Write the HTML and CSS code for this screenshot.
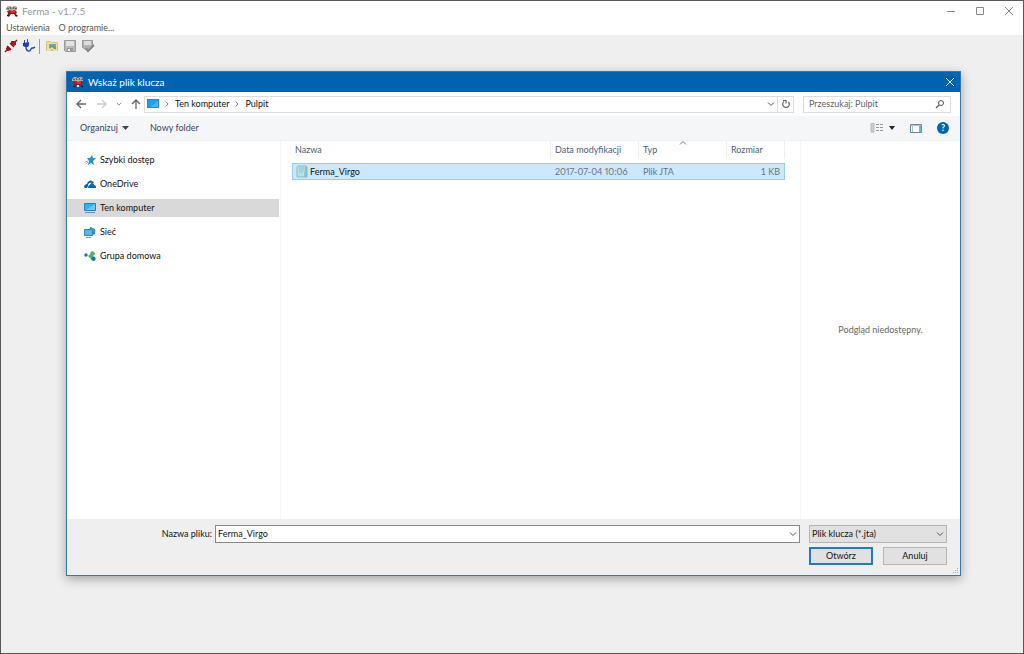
FILE: index.html
```html
<!DOCTYPE html>
<html lang="pl">
<head>
<meta charset="utf-8">
<title>Ferma - v1.7.5</title>
<link rel="stylesheet" href="styles.css">
</head>
<body>
<svg class="defs" width="0" height="0" aria-hidden="true">
  <symbol id="crab" viewBox="0 0 12 12">
    <path d="M0 3l2-2h2l2 1 2-1h2l1 2v2H9L6 6 3 5H0z" fill="#b9aaa2"/>
    <path d="M1 3l2 1M4 2l1 2M8 2L7 4M11 3L9 4" stroke="#5a4340" fill="none"/>
    <path d="M1 6l3-1 2 1 3-1 2 2-1 2 2 2-2 1-2-3H5l-2 3-2-1 1-3z" fill="#8a2022"/>
    <path d="M3 5l2 1-1 2zM7 5h2v3H7zM5 6h2v2H5z" fill="#e02830"/>
    <path d="M1 10h2v1H1zM9 10h2v1H9z" fill="#2c1b1b"/>
    <path d="M5 9h2v2H5z" fill="#f5e9e6"/>
  </symbol>
  <symbol id="cross" viewBox="0 0 10 10"><path d="M1 1l8 8M9 1L1 9" fill="none" stroke="currentColor"/></symbol>
  <symbol id="chevron" viewBox="0 0 8 8"><path d="M1 2.500l3 3 3-3" fill="none" stroke="currentColor"/></symbol>
  <symbol id="arrow" viewBox="0 0 10 10"><path d="M1 5h9M5 1L1 5l4 4" fill="none" stroke="currentColor" stroke-width="1.300"/></symbol>
</svg>
<div class="app">
  <header class="titlebar">
    <svg class="crab"><use href="#crab"/></svg>
    <h1 class="title">Ferma - v1.7.5</h1>
    <div class="window-buttons">
      <button class="plain" aria-label="Minimalizuj"><svg width="10" height="10"><path d="M1 5.500h8" stroke="currentColor"/></svg></button>
      <button class="plain" aria-label="Maksymalizuj"><svg width="10" height="10"><path d="M1.500 1.500h7v7h-7z" fill="none" stroke="currentColor"/></svg></button>
      <button class="plain" aria-label="Zamknij"><svg width="10" height="10"><use href="#cross"/></svg></button>
    </div>
  </header>
  <nav class="menu">
    <button class="plain">Ustawienia</button>
    <button class="plain">O programie...</button>
  </nav>
  <div class="tools">
    <button class="plain" aria-label="Rozłącz"><svg width="14" height="14" viewBox="0 0 14 14"><path d="M1 13l2-2M11 3l2-2" stroke="#8d1a1a" stroke-width="1.500"/><path d="M2 9l2-2 3 3-2 2H2zM7 5V2h4l1 1v3l-2 1z" fill="#a51a1d"/><path d="M3 7l4 4M6 4l4 4" stroke="#7c1015" stroke-width="1.300"/></svg></button>
    <button class="plain" aria-label="Połącz"><svg width="14" height="14" viewBox="0 0 14 14"><path d="M2.500 1v3M5.500 0v3" stroke="#334a91"/><path d="M1 4l6-1v3L6 8H3L1 7z" fill="#1c3fc0"/><path d="M4 8c0 5 4 5 5 2 1-2 2 0 4-2" fill="none" stroke="#24459f" stroke-width="1.300"/></svg></button>
    <span class="divider"></span>
    <button class="plain" aria-label="Otwórz"><svg width="14" height="14" viewBox="0 0 14 14"><path d="M1.500 3.500v-1h4l1 1h6v8h-11z" fill="#f4df91" stroke="#d6c27d"/><path d="M4 5h7v4H4z" fill="#5aaed2"/><path d="M5 8l3-2 3 3v2H5z" fill="#6b9b79"/><path d="M2 11h3l2-2 2 2h3" fill="none" stroke="#f4e6aa" stroke-width="1.500"/></svg></button>
    <button class="plain" aria-label="Zapisz" disabled><svg width="14" height="14" viewBox="0 0 14 14"><path d="M1.500 1.500h11v11h-10l-1-1z" fill="#b9b9b9" stroke="#999"/><path d="M3 2h8v5H3z" fill="#e1e1e1"/><path d="M4 9h6v3H4z" fill="#999"/><path d="M5 10h2v2H5z" fill="#eee"/></svg></button>
    <button class="plain" aria-label="Zapisz jako" disabled><svg width="14" height="14" viewBox="0 0 14 14"><path d="M1.500 1.500h10v7l-4 4-6-4z" fill="#b2b2b2" stroke="#999"/><path d="M3 2h7v4H3z" fill="#ddd"/><path d="M5 9l2 3 6-6" fill="none" stroke="#888" stroke-width="2"/></svg></button>
  </div>
  <main class="workspace">
    <section class="dialog" role="dialog" aria-labelledby="dialog-title">
      <header class="dialog-title">
        <svg class="crab"><use href="#crab"/></svg>
        <h2 class="title" id="dialog-title">Wskaż plik klucza</h2>
        <button class="plain" aria-label="Zamknij okno"><svg width="10" height="10"><use href="#cross"/></svg></button>
      </header>
      <div class="navigation">
        <div class="history">
          <button class="plain" aria-label="Wstecz"><svg width="10" height="10"><use href="#arrow"/></svg></button>
          <button class="plain faint" aria-label="Dalej"><svg class="flip" width="10" height="10"><use href="#arrow"/></svg></button>
          <button class="plain recent" aria-label="Ostatnie"><svg width="6" height="6"><use href="#chevron"/></svg></button>
          <button class="plain" aria-label="W górę"><svg class="up" width="10" height="10"><use href="#arrow"/></svg></button>
        </div>
        <div class="address">
          <svg width="12" height="10"><path d="M0 0h12v9H0z" fill="#168ce0"/><path d="M1 1h10v7H1z" fill="#16a3f5"/><path d="M3 8l8-6v6z" fill="#42b9ff"/></svg>
          <svg class="right" width="6" height="6"><use href="#chevron"/></svg>
          <button class="plain">Ten komputer</button>
          <svg class="right" width="6" height="6"><use href="#chevron"/></svg>
          <button class="plain">Pulpit</button>
          <button class="plain push" aria-label="Poprzednie lokalizacje"><svg width="8" height="8"><use href="#chevron"/></svg></button>
          <button class="plain refresh" aria-label="Odśwież"><svg width="10" height="10" viewBox="0 0 10 10"><path d="M3 2.500A3.300 3.300 0 1 0 7.500 3M2 1.500h3v3" fill="none" stroke="currentColor" stroke-width="1.200"/></svg></button>
        </div>
        <div class="search">
          <input type="text" placeholder="Przeszukaj: Pulpit" aria-label="Przeszukaj: Pulpit">
          <svg width="10" height="10"><circle cx="6" cy="4" r="2.500" fill="none" stroke="currentColor"/><path d="M4 6L1 9" stroke="currentColor" stroke-width="1.300"/></svg>
        </div>
      </div>
      <div class="commands">
        <button class="plain">Organizuj <svg width="7" height="4"><path d="M0 0h7L3.500 4z" fill="currentColor"/></svg></button>
        <button class="plain">Nowy folder</button>
        <div class="view-buttons">
          <button class="plain" aria-label="Zmień widok"><svg width="13" height="10"><path d="M1 1h3M1 3h3M1 5h3M1 7h3M1 9h3" stroke="#aaa"/><path d="M1 .5h3v8H1z" fill="none" stroke="#b8b8b8"/><path d="M6 1.500h3M10 1.500h3M6 4.500h3M10 4.500h3M6 7.500h3M10 7.500h3" stroke="#999"/></svg><svg class="down" width="6" height="4"><path d="M0 0h6L3 4z" fill="#222"/></svg></button>
          <button class="plain" aria-label="Okienko podglądu"><svg width="12" height="9"><path d="M.5.5h11v8H.5z" fill="#fff" stroke="#6d8799"/><path d="M9 1h2v7H9z" fill="#6bb8e5"/><path d="M1 1.500h10M2.500 2v6" stroke="#b4c2cc"/></svg></button>
          <button class="plain help" aria-label="Pomoc">?</button>
        </div>
      </div>
      <div class="browser">
        <nav class="places">
          <a href="#quick"><svg width="12" height="12"><path d="M8 1l1 3h3L9 7l1 4-3-2-3 2 1-4-2-3h3z" fill="#278fdb"/><path d="M1 8l3-1M2 10l2-2" stroke="#80bce7"/></svg>Szybki dostęp</a>
          <a href="#onedrive"><svg width="12" height="12"><path d="M0 9c0-2 2-3 3-3 1-4 5-5 7-1H8C5 4 4 6 4 8L3 10H1z" fill="#0863b5"/><path d="M4 10c0-2 1-3 2-3 1-3 4-2 4 0 2 0 3 3 1 3z" fill="#0863b5"/></svg>OneDrive</a>
          <a class="current" href="#computer"><svg width="12" height="12"><path d="M.5 1.500h11v7H.5z" fill="#31b1f3" stroke="#2782b7"/><path d="M2 8l9-6v6z" fill="#69caff"/><path d="M1 10.500h10" stroke="#7192a5"/></svg>Ten komputer</a>
          <a href="#network"><svg width="12" height="12"><path d="M6 1l5 2v5l-5 2z" fill="#2c83b2"/><path d="M7 1l5 4-5 3z" fill="#3e9ac7"/><path d="M.5 3.500h8v6h-8z" fill="#51baf1" stroke="#3488b8"/><path d="M2 11.500h5" stroke="#6499b7"/></svg>Sieć</a>
          <a href="#homegroup"><svg width="12" height="12"><circle cx="2" cy="5" r="1.700" fill="#1772a8"/><path d="M4 6l5-4v4l2 4H8z" fill="#54af6d"/><circle cx="8.500" cy="3.500" r="2.300" fill="#55b26d"/><circle cx="9.500" cy="8.800" r="2.200" fill="#147ca0"/></svg>Grupa domowa</a>
        </nav>
        <div class="files">
          <table>
            <colgroup><col><col class="date-col"><col class="type-col"><col class="size-col"></colgroup>
            <thead><tr><th>Nazwa</th><th>Data modyfikacji</th><th class="sorted">Typ<svg class="sort" width="8" height="8"><use href="#chevron"/></svg></th><th>Rozmiar</th></tr></thead>
            <tbody><tr><td><span class="file"><svg width="12" height="13"><path d="M2 1h8l1 1v10H1V2z" fill="#b8e3e6" stroke="#8db6bf"/><path d="M3 3h5M3 5h5M3 7h4" stroke="#86c3ca"/><path d="M9 2h2v10H8z" fill="#8dbfc7"/></svg>Ferma_Virgo</span></td><td class="date">2017-07-04 10:06</td><td>Plik JTA</td><td>1 KB</td></tr></tbody>
          </table>
        </div>
        <aside class="preview">Podgląd niedostępny.</aside>
      </div>
      <footer class="dialog-footer">
        <label for="filename">Nazwa pliku:</label>
        <div class="combo"><input id="filename" type="text" value="Ferma_Virgo"><button class="plain" aria-label="Lista plików"><svg width="8" height="8"><use href="#chevron"/></svg></button></div>
        <div class="filter"><select aria-label="Typ pliku"><option>Plik klucza (*.jta)</option></select><svg width="8" height="8"><use href="#chevron"/></svg></div>
        <div class="actions"><button class="action primary">Otwórz</button><button class="action">Anuluj</button></div>
        <svg class="grip" width="6" height="6"><path d="M4 0h1v1H4zM2 2h1v1H2zM4 2h1v1H4zM0 4h1v1H0zM2 4h1v1H2zM4 4h1v1H4z" fill="#aaa"/></svg>
      </footer>
    </section>
  </main>
</div>
</body>
</html>
```
FILE: styles.css
```css
* { box-sizing: border-box; }
body { margin: 0; font: 9px/12px Lato, "Open Sans", sans-serif; color: #111; }
button, input, select { font: inherit; color: inherit; margin: 0; }
svg { display: block; flex: none; }
.defs { position: absolute; }
.plain { border: 0; padding: 0; background: none; }
.app { display: flex; flex-direction: column; min-height: 100vh; border: 1px solid #57575a; background: #efefef; }
.titlebar { display: flex; align-items: center; height: 20px; padding: 0 9px 0 5px; background: #fff; color: #999; }
.crab { width: 12px; height: 12px; }
.title { flex: 1; margin: 0 0 0 4px; font-size: 10px; font-weight: 400; line-height: 14px; }
.window-buttons { display: flex; gap: 19px; color: #888; }
.menu { display: flex; gap: 9px; height: 14px; padding: 0 5px; background: #fff; color: #555; }
.tools { display: flex; align-items: center; gap: 4px; height: 22px; padding: 0 3px; }
.divider { width: 1px; height: 15px; margin: 0 -1px; background: #999; }
.divider + .plain { margin-left: 2px; }
.workspace { display: flex; flex: 1; padding: 14px 62px 77px 65px; }
.dialog { display: flex; flex: 1; flex-direction: column; min-width: 0; border: 1px solid #3478ad; background: #fff; box-shadow: 0 3px 10px #0005; }
.dialog-title { display: flex; align-items: center; height: 20px; padding: 0 5px; background: #0063b1; color: #fff; }
.navigation { display: flex; align-items: center; height: 24px; padding-right: 9px; }
.history { display: flex; align-items: center; gap: 11px; width: 77px; padding-left: 9px; color: #666; }
.faint { color: #ccc; }
.history .recent { margin: 0 -2px; }
.flip { transform: rotate(180deg); }
.up { transform: rotate(90deg); }
.address { display: flex; flex: 1; align-items: center; height: 17px; gap: 5px; padding-left: 2px; border: 1px solid #ddd; }
.address .plain { line-height: 12px; }
.right { transform: rotate(-90deg); color: #444; }
.address .push { margin-left: auto; }
.address .refresh { display: flex; align-items: center; justify-content: center; width: 16px; height: 15px; margin-left: -3px; border-left: 1px solid #ddd; color: #666; }
.search { display: flex; align-items: center; width: 148px; height: 17px; margin-left: 9px; padding: 0 5px; border: 1px solid #ddd; color: #555; }
.search input { flex: 1; min-width: 0; border: 0; padding: 0; outline: 0; background: transparent; }
.search input::placeholder { color: #666; opacity: 1; }
.commands { display: flex; align-items: center; gap: 21px; height: 24px; padding: 0 11px 0 13px; background: #f5f6f7; color: #344767; }
.commands .plain { display: flex; align-items: center; gap: 4px; }
.view-buttons { display: flex; align-items: center; gap: 15px; margin-left: auto; }
.view-buttons .down { margin-left: 2px; }
.view-buttons .help { justify-content: center; width: 12px; height: 12px; border-radius: 50%; background: #0063b1; color: #fff; font-weight: 700; }
.browser { display: grid; flex: 1; grid-template-columns: 214px 1fr 160px; border-top: 1px solid #eef0f4; }
.places { display: flex; flex-direction: column; gap: 6px; padding: 10px 1px 0 0; border-right: 1px solid #f5f5f5; }
.places a { display: flex; align-items: center; gap: 4px; height: 18px; padding-left: 17px; color: inherit; text-decoration: none; }
.places .current { background: #d9d9d9; }
.files { padding: 0 15px 0 11px; }
table { width: 100%; table-layout: fixed; border-collapse: separate; border-spacing: 0; }
.date-col, .type-col { width: 88px; }
.size-col { width: 58px; }
th { position: relative; height: 18px; padding: 0 0 0 4px; border-right: 1px solid #eee; color: #4c607a; font-weight: 400; text-align: left; }
th:first-child, td:first-child { padding-left: 3px; }
.sort { position: absolute; top: -2px; left: 40px; transform: rotate(180deg); color: #777; }
thead::after { content: ""; display: block; height: 4px; }
td { height: 17px; padding: 0 4px; border: solid #99cdf0; border-width: 1px 0; background: #cce8ff; color: #69737b; }
td:first-child { border-left-width: 1px; color: #111; }
td:last-child { border-right-width: 1px; text-align: right; }
.date { font-variant-numeric: proportional-nums; }
.file { display: flex; align-items: center; gap: 2px; }
.preview { display: flex; align-items: center; justify-content: center; border-left: 1px solid #f5f5f5; color: #666; }
.dialog-footer { position: relative; display: grid; grid-template-columns: 145px 1fr 138px; gap: 4px 0; padding: 6px 13px 10px 0; background: #efefef; }
.dialog-footer label { padding-top: 3px; text-align: right; }
.combo { display: flex; align-items: center; height: 18px; margin: 0 9px 0 3px; padding: 0 2px; border: 1px solid #888; background: #fff; }
.combo input { flex: 1; min-width: 0; padding: 0; border: 0; outline: 0; }
.filter { position: relative; }
.filter select { appearance: none; width: 100%; height: 18px; padding: 0 12px 0 2px; border: 1px solid #b5b5b5; border-radius: 0; background: #e1e1e1; }
.filter svg { position: absolute; top: 5px; right: 3px; pointer-events: none; }
.combo svg, .filter svg, .push svg { color: #555; }
.actions { display: grid; grid-column: 3; grid-template-columns: 1fr 1fr; gap: 10px; }
.action { height: 18px; padding: 0; border: 1px solid #b5b5b5; background: #e1e1e1; }
.action.primary { border: 2px solid #2478c6; }
.grip { position: absolute; right: 1px; bottom: 1px; }
```
